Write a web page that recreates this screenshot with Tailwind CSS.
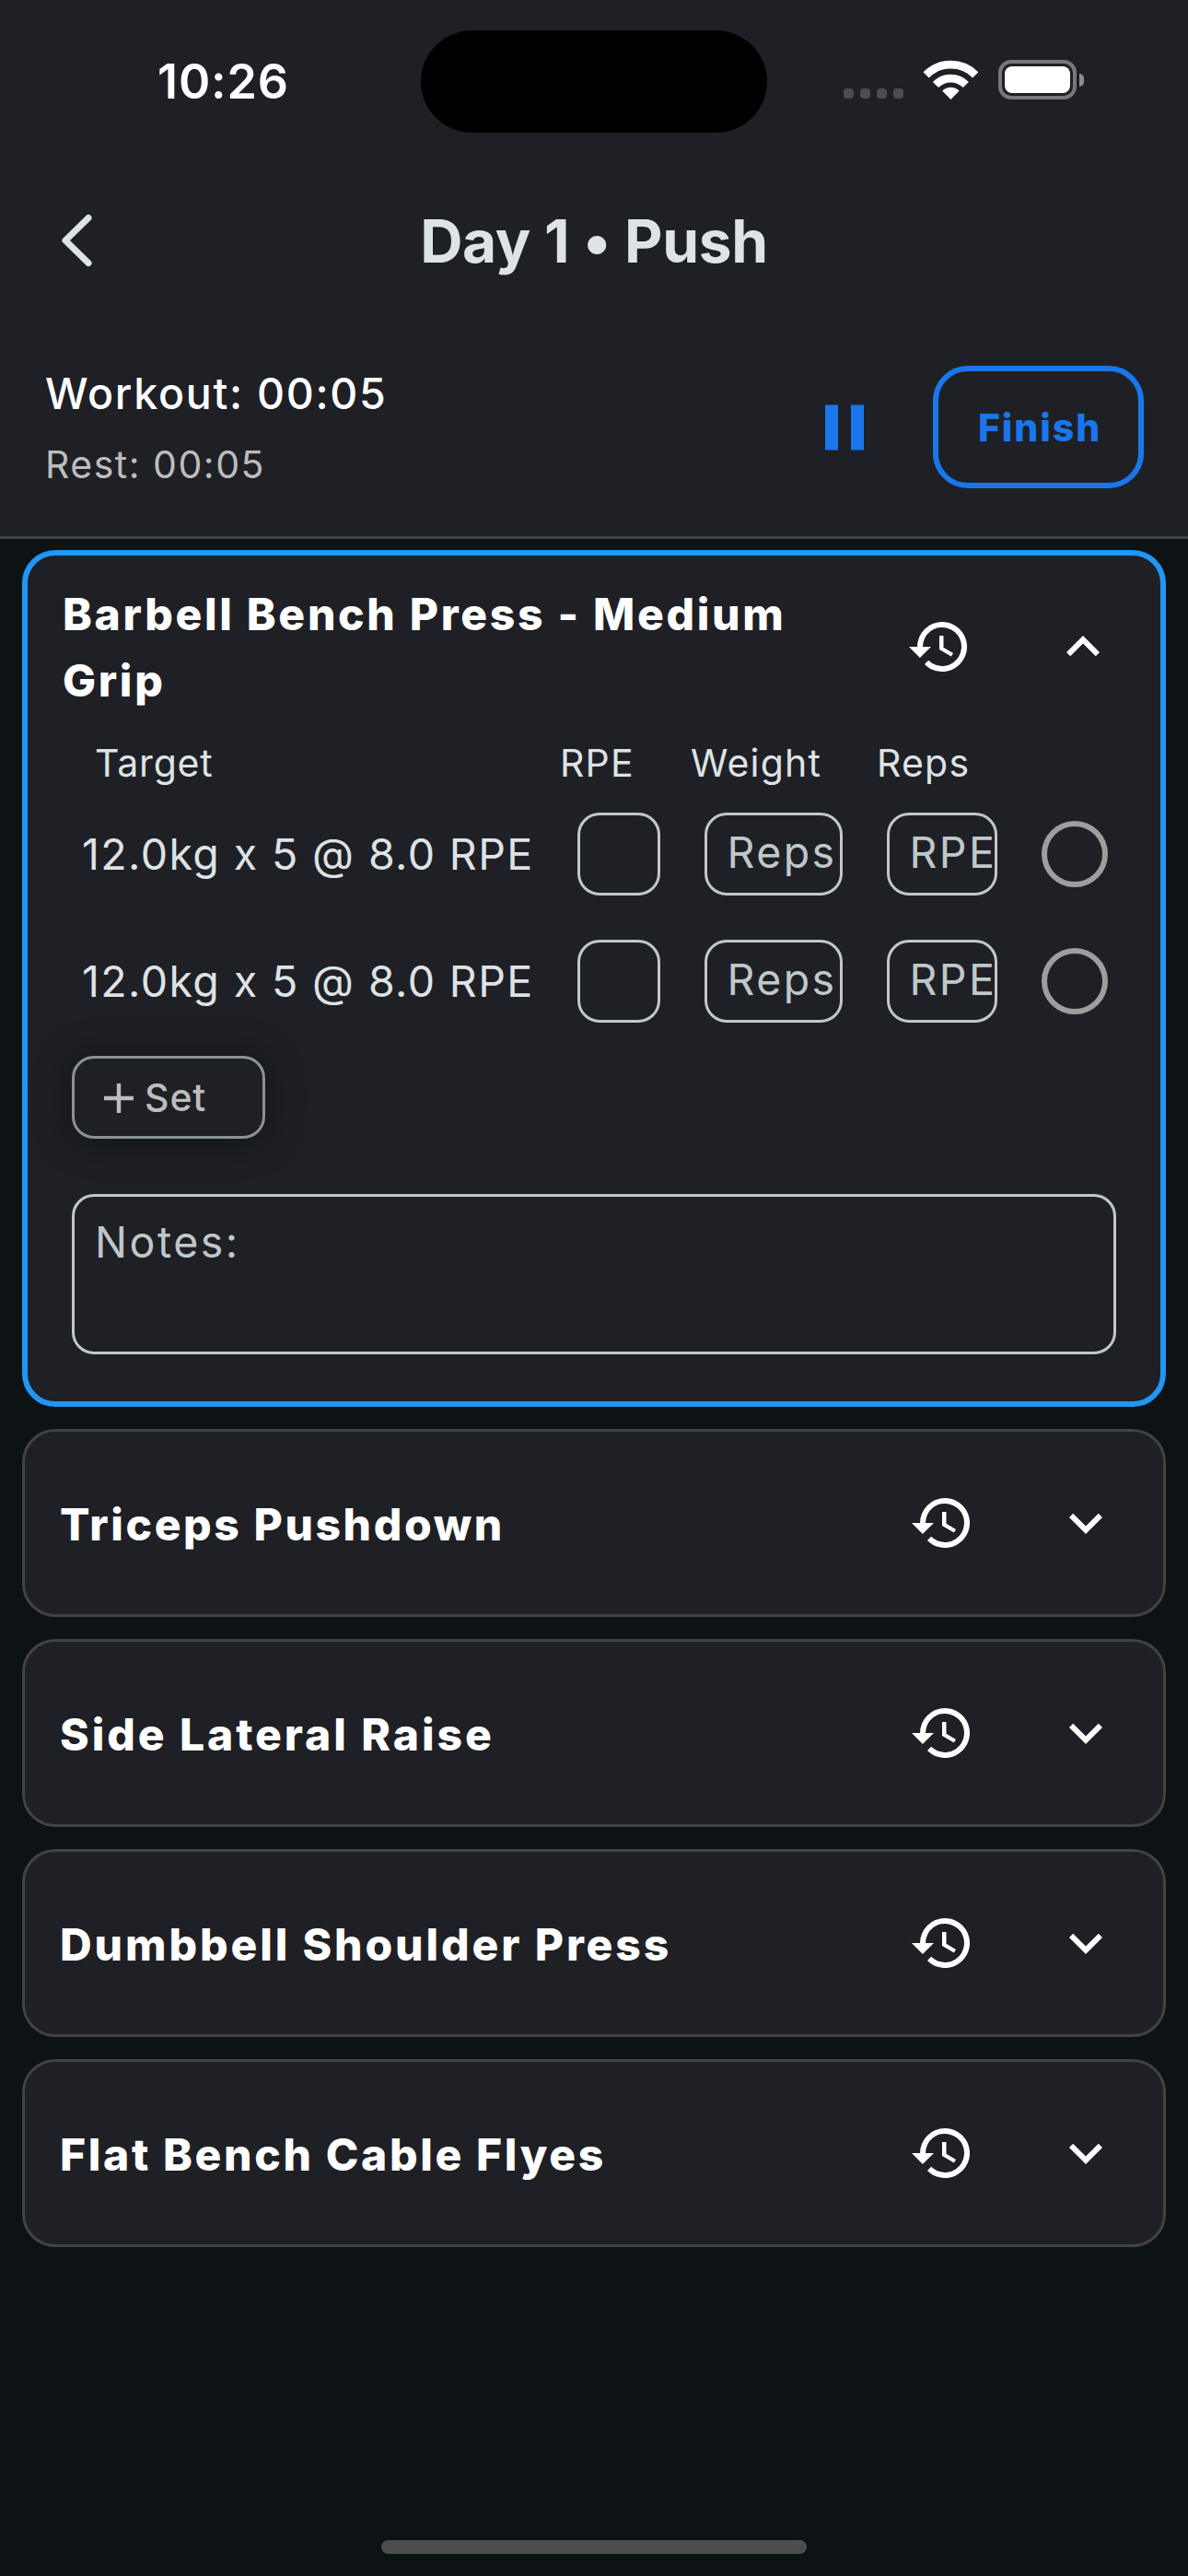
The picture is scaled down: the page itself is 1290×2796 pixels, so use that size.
<!DOCTYPE html>
<html lang="en">
<head>
<meta charset="utf-8">
<meta name="viewport" content="width=device-width, initial-scale=1">
<title>Day 1 • Push</title>
<script src="https://cdn.jsdelivr.net/npm/@tailwindcss/browser@4"></script>
</head>
<body class="flex h-[2796px] w-[1290px] flex-col overflow-hidden bg-[#0d1315] font-['Inter',sans-serif] text-white">

<svg class="hidden">
  <symbol id="history" viewBox="0 0 24 24"><path fill="currentColor" d="M13 3a9 9 0 0 0-9 9H1l3.89 3.89.07.14L9 12H6a7 7 0 1 1 2.06 4.94l-1.42 1.42A9 9 0 1 0 13 3zm-1 5v5l4.28 2.54.72-1.21-3.5-2.08V8H12z"/></symbol>
  <symbol id="expand" viewBox="0 0 24 24"><path fill="currentColor" d="M16.59 8.59 12 13.17 7.41 8.59 6 10l6 6 6-6z"/></symbol>
  <symbol id="collapse" viewBox="0 0 24 24"><path fill="currentColor" d="M12 8l-6 6 1.41 1.41L12 10.83l4.59 4.58L18 14z"/></symbol>
</svg>

<header class="h-[585px] border-b-3 border-[#424242] bg-[#1f2025]">
  <!-- status bar -->
  <div class="flex h-[177px] items-center">
    <div class="w-[457px] pl-[171px] text-[52px] font-semibold leading-none tracking-[0.9px]">10:26</div>
    <div class="h-[111px] w-[376px] rounded-full bg-black"></div>
    <div class="ml-[83px] flex gap-[7px] pt-[26px]">
      <i class="size-[11px] rounded-[4px] bg-[#4c4d51]"></i><i class="size-[11px] rounded-[4px] bg-[#4c4d51]"></i><i class="size-[11px] rounded-[4px] bg-[#4c4d51]"></i><i class="size-[11px] rounded-[4px] bg-[#4c4d51]"></i>
    </div>
    <svg class="-mt-1 ml-[21px] h-[44px] w-[60px]" viewBox="0 0 60 44" fill="none" stroke="#fff" stroke-width="8.7">
      <path d="M3.6 16.4A37.7 37.7 0 0 1 57.2 16.4"/>
      <path d="M14 27A23 23 0 0 1 46.8 27"/>
      <path d="M30.4 42.2 22 33.7A12 12 0 0 1 38.8 33.7Z" fill="#fff" stroke-width="1.2" stroke-linejoin="round"/>
    </svg>
    <div class="-mt-1 ml-[22px] flex items-center gap-[3px]">
      <div class="h-[43px] w-[85px] rounded-[14px] border-4 border-[#77787c] p-[3px]"><div class="h-full w-full rounded-[8px] bg-white"></div></div>
      <div class="h-[14px] w-[5px] rounded-r-full bg-[#8b8c8f]"></div>
    </div>
  </div>
  <!-- app bar -->
  <div class="grid h-[168px] grid-cols-[1fr_auto_1fr] items-center">
    <svg class="ml-[66px] h-[58px] w-[36px]" viewBox="0 0 36 58" fill="none" stroke="#dee3e5" stroke-width="7" stroke-linecap="round" stroke-linejoin="round"><path d="M30 4.5 5 29 30 53.5"/></svg>
    <h1 class="pt-[2px] text-[64px] font-bold leading-none tracking-[-0.3px] text-[#dee3e5]">Day 1 • Push</h1>
  </div>
  <!-- timers -->
  <div class="flex h-[237px] items-center pl-[49px] pr-12">
    <div class="flex-1 pt-1">
      <p class="text-[46.5px] font-medium leading-[77px] tracking-[1.72px]">Workout: 00:05</p>
      <p class="text-[41px] leading-[77px] tracking-[1.5px] text-[#bdbdbd]">Rest: 00:05</p>
    </div>
    <svg class="mr-[54px] size-[84px] text-[#1a77eb]" viewBox="0 0 24 24"><path fill="currentColor" d="M6 19h4V5H6v14zm8-14v14h4V5h-4z"/></svg>
    <button class="flex h-[133px] w-[229px] items-center justify-center rounded-[38px] border-6 border-[#1a77eb] pl-[3px] pt-[2px] text-[41px] font-extrabold tracking-[1.9px] text-[#1a77eb]">Finish</button>
  </div>
</header>

<main class="flex flex-col gap-6 px-6 pt-3">
  <section class="h-[930px] rounded-[36px] border-6 border-[#2196f3] bg-[#1f2025]">
    <div class="flex items-center pl-[38px] pr-12 pt-7">
      <h2 class="mr-12 flex-1 text-[48px] font-extrabold leading-[72px] tracking-[2.7px]">Barbell Bench Press - Medium Grip</h2>
      <svg class="-mt-0.5 mr-[84px] size-[72px]"><use href="#history"/></svg>
      <svg class="-mt-0.5 size-[72px]"><use href="#collapse"/></svg>
    </div>
    <div class="mt-[23px] flex pl-[73px] text-[41px] leading-[60px] tracking-[1.2px] text-[#dee3e5]">
      <span class="w-[505px] tracking-[0.8px]">Target</span><span class="w-[142px]">RPE</span><span class="w-[202px]">Weight</span><span>Reps</span>
    </div>
    <div class="mt-6 flex flex-col gap-12 px-12">
      <div class="flex h-[90px] items-center gap-12">
        <span class="w-[500.5px] whitespace-nowrap pl-[11px] pt-[2px] text-[46.5px] tracking-[1.4px] text-[#dee3e5]">12.0kg x 5 @ 8.0 RPE</span>
        <div class="h-[90px] w-[90px] rounded-[24px] border-3 border-[#bfc8ca]"></div>
        <div class="flex h-[90px] w-[150px] items-center overflow-hidden rounded-[24px] border-3 border-[#bfc8ca] pb-[2px] pl-[22px] text-[46.5px] tracking-[2.4px] text-[#bfc8ca]">Reps</div>
        <div class="flex h-[90px] w-[120px] items-center overflow-hidden rounded-[24px] border-3 border-[#bfc8ca] pb-[2px] pl-[22px] text-[46.5px] tracking-[2.4px] text-[#bfc8ca]">RPE</div>
        <div class="size-[72px] rounded-full border-6 border-[#9e9e9e]"></div>
      </div>
      <div class="flex h-[90px] items-center gap-12">
        <span class="w-[500.5px] whitespace-nowrap pl-[11px] pt-[2px] text-[46.5px] tracking-[1.4px] text-[#dee3e5]">12.0kg x 5 @ 8.0 RPE</span>
        <div class="h-[90px] w-[90px] rounded-[24px] border-3 border-[#bfc8ca]"></div>
        <div class="flex h-[90px] w-[150px] items-center overflow-hidden rounded-[24px] border-3 border-[#bfc8ca] pb-[2px] pl-[22px] text-[46.5px] tracking-[2.4px] text-[#bfc8ca]">Reps</div>
        <div class="flex h-[90px] w-[120px] items-center overflow-hidden rounded-[24px] border-3 border-[#bfc8ca] pb-[2px] pl-[22px] text-[46.5px] tracking-[2.4px] text-[#bfc8ca]">RPE</div>
        <div class="size-[72px] rounded-full border-6 border-[#9e9e9e]"></div>
      </div>
    </div>
    <div class="mt-9 px-12">
      <button class="flex h-[90px] w-[210px] items-center gap-3 rounded-[24px] border-3 border-[#899294] bg-[#1f2025] pl-8 pt-[2px] text-[41px] font-medium tracking-[0.9px] text-[#bdbdbd] shadow-[0_2px_42px_rgba(0,0,0,0.45)]">
        <svg class="size-[32px]" viewBox="0 0 32 32" stroke="currentColor" stroke-width="4.4"><path d="M16 0v32M0 16h32"/></svg>Set
      </button>
      <div class="mt-[60px] h-[174px] rounded-[24px] border-3 border-[#bfc8ca] bg-[#1f2025] pl-[22px] pt-[14px] text-[46.5px] leading-[70px] tracking-[2.5px] text-[#bfc8ca]">Notes:</div>
    </div>
  </section>

  <section class="flex h-[204px] items-center rounded-[36px] border-3 border-[#424242] bg-[#1f2025] pl-[38px] pr-12">
    <h2 class="flex-1 pt-[3px] text-[48px] font-extrabold tracking-[2.6px]">Triceps Pushdown</h2>
    <svg class="mr-[84px] size-[72px]"><use href="#history"/></svg><svg class="size-[72px]"><use href="#expand"/></svg>
  </section>
  <section class="flex h-[204px] items-center rounded-[36px] border-3 border-[#424242] bg-[#1f2025] pl-[38px] pr-12">
    <h2 class="flex-1 pt-[3px] text-[48px] font-extrabold tracking-[2.95px]">Side Lateral Raise</h2>
    <svg class="mr-[84px] size-[72px]"><use href="#history"/></svg><svg class="size-[72px]"><use href="#expand"/></svg>
  </section>
  <section class="flex h-[204px] items-center rounded-[36px] border-3 border-[#424242] bg-[#1f2025] pl-[38px] pr-12">
    <h2 class="flex-1 pt-[3px] text-[48px] font-extrabold tracking-[2.9px]">Dumbbell Shoulder Press</h2>
    <svg class="mr-[84px] size-[72px]"><use href="#history"/></svg><svg class="size-[72px]"><use href="#expand"/></svg>
  </section>
  <section class="flex h-[204px] items-center rounded-[36px] border-3 border-[#424242] bg-[#1f2025] pl-[38px] pr-12">
    <h2 class="flex-1 pt-[3px] text-[48px] font-extrabold tracking-[2.65px]">Flat Bench Cable Flyes</h2>
    <svg class="mr-[84px] size-[72px]"><use href="#history"/></svg><svg class="size-[72px]"><use href="#expand"/></svg>
  </section>
</main>

<!-- home indicator -->
<div class="mx-auto mb-6 mt-auto h-[15px] w-[462px] rounded-full bg-[#4d4d4d]"></div>
</body>
</html>
